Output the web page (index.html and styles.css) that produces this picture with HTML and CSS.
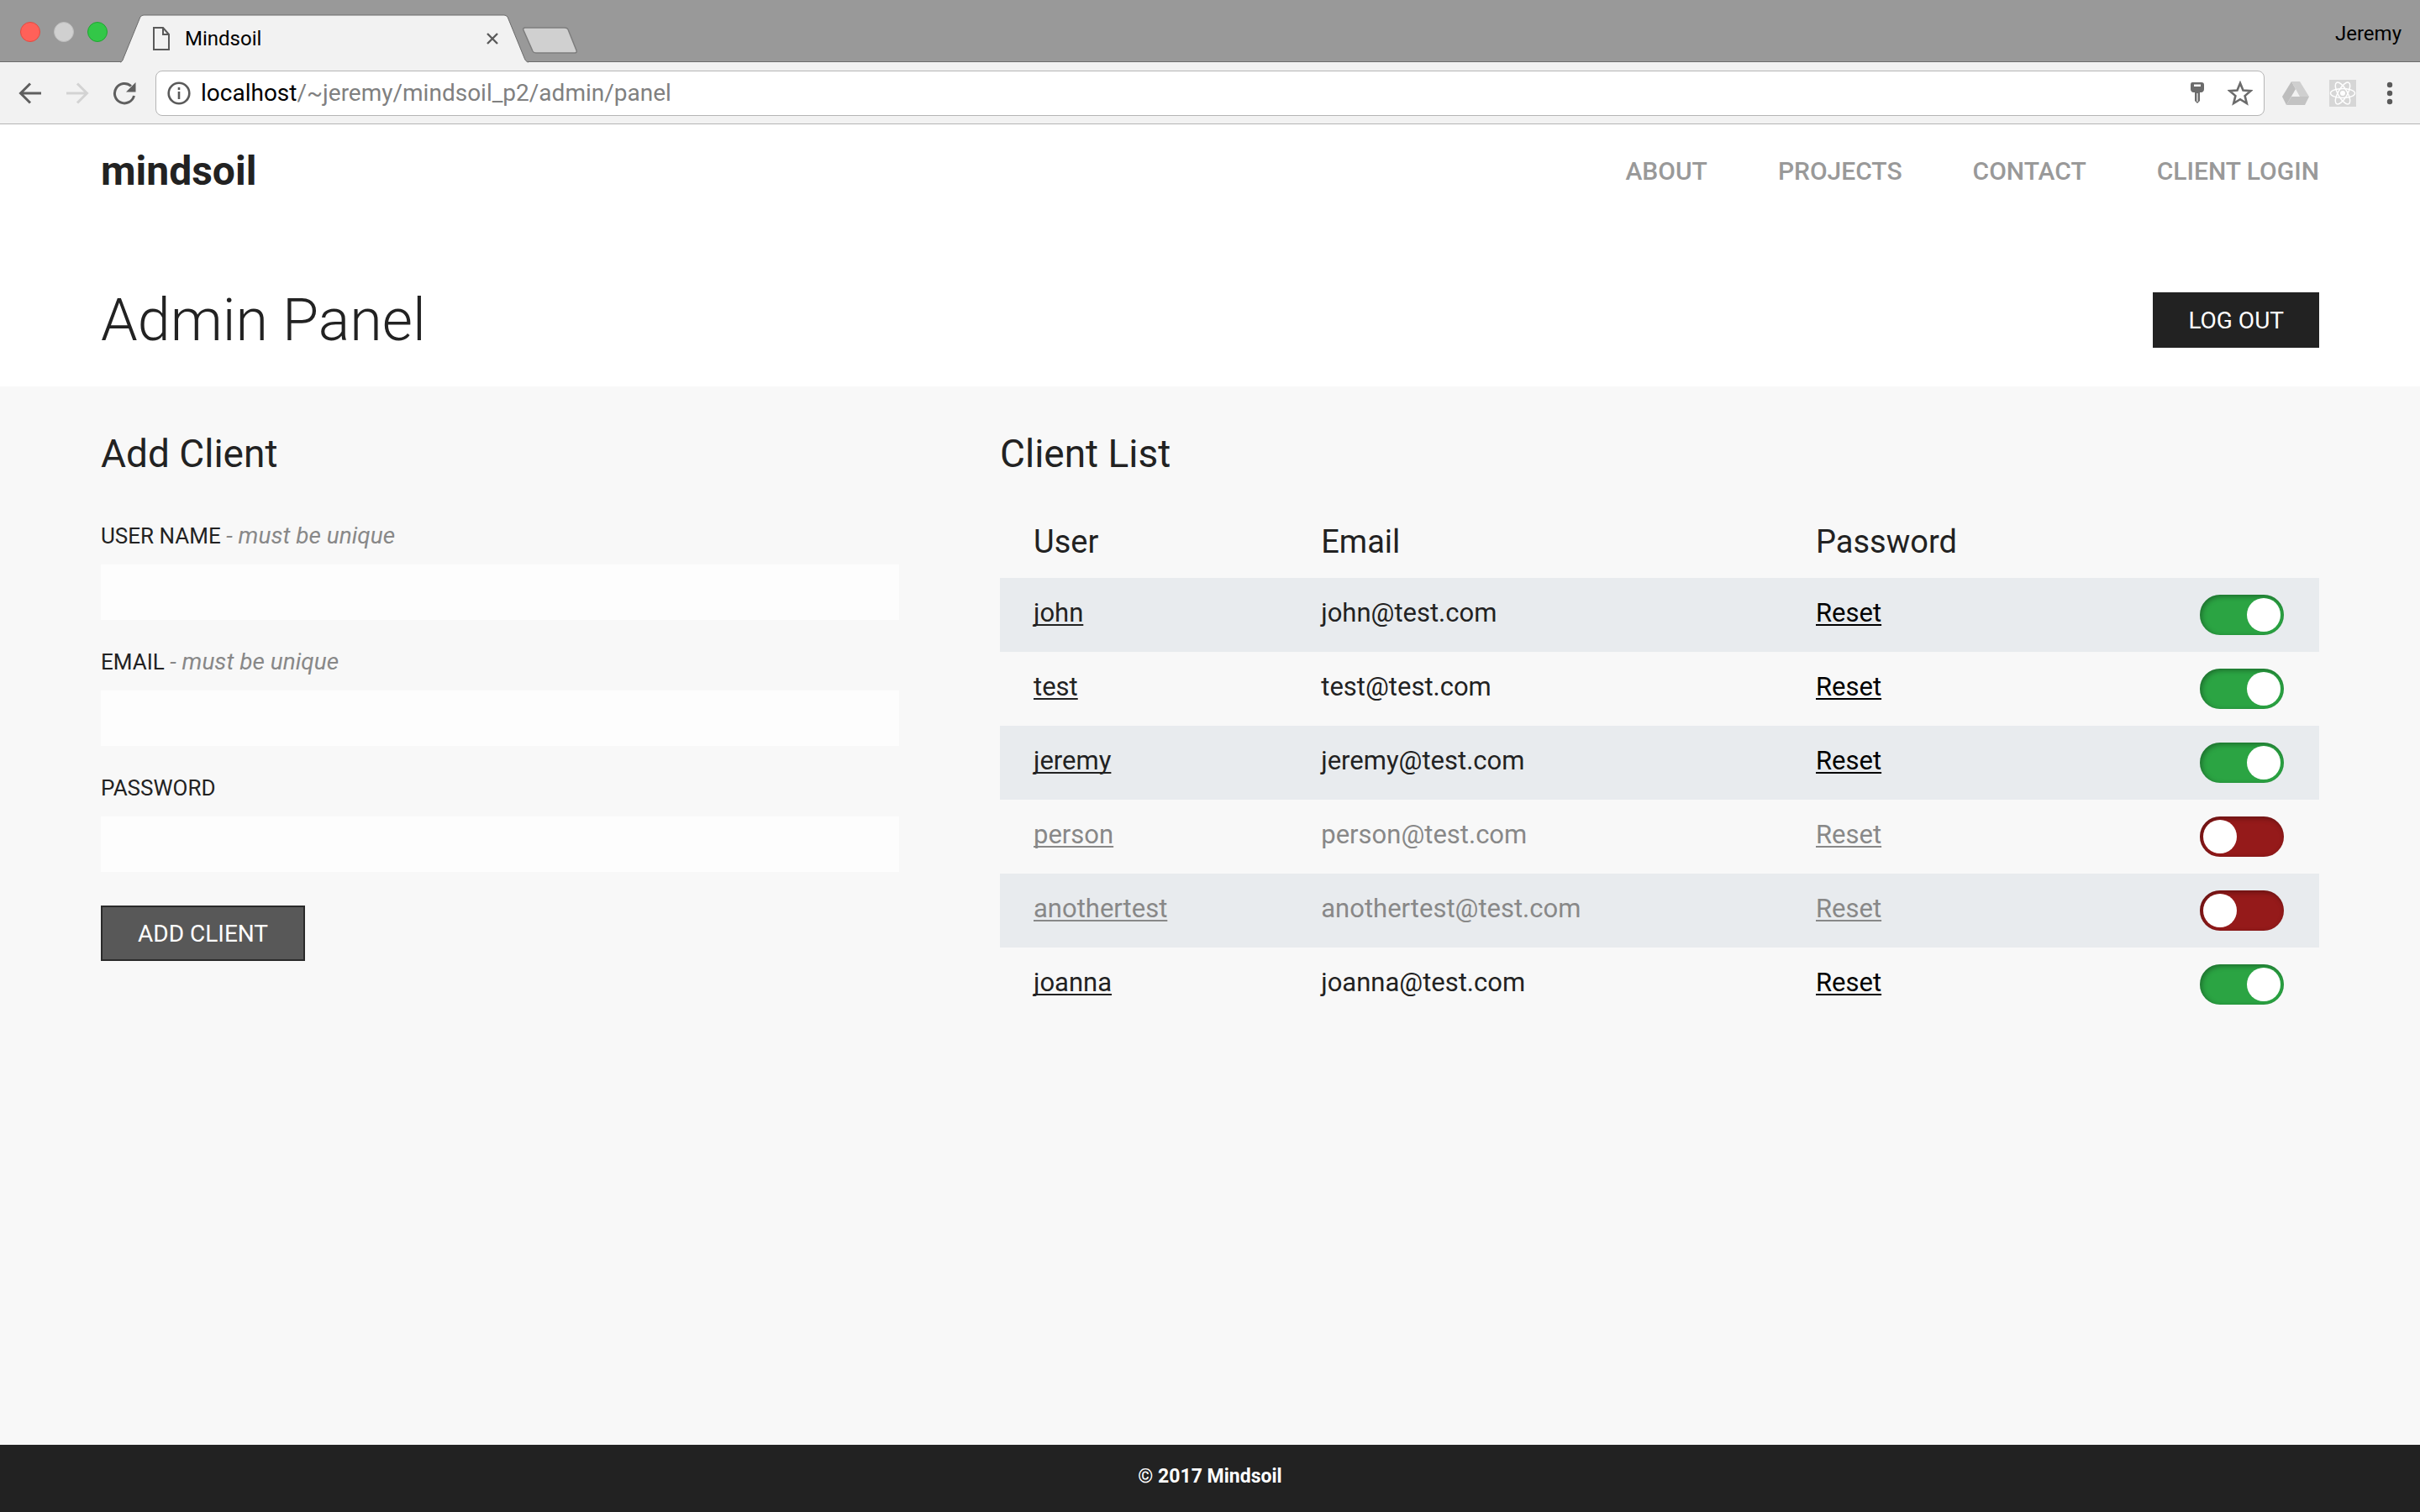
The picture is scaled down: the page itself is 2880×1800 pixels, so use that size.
FILE: index.html
```html
<!DOCTYPE html>
<html lang="en">
<head>
<meta charset="utf-8">
<meta name="viewport" content="width=device-width, initial-scale=1">
<title>Mindsoil</title>
<link rel="stylesheet" href="styles.css">
</head>
<body>
<div class="browser">
  <div class="tabstrip">
    <div class="lights">
      <button class="light light-close" type="button" aria-label="Close window"></button>
      <button class="light light-min" type="button" aria-label="Minimize window"></button>
      <button class="light light-zoom" type="button" aria-label="Zoom window"></button>
    </div>
    <div class="tab">
      <svg class="tab-shape" width="486" height="58" viewBox="0 0 486 58" aria-hidden="true">
        <path d="M0 58 L0 57 C2 57 3 55 4 52 L24 3 Q26 1 28 1 L457 1 Q459 1 461 3 L481 52 C482 55 484 57 486 57 L486 58 Z" fill="#f2f2f2"/>
        <path d="M0 57 C2 57 3 55 4 52 L24 3 Q26 1 28 1 L457 1 Q459 1 461 3 L481 52 C482 55 484 57 486 57" fill="none" stroke="#6b6b6b" stroke-width="1"/>
      </svg>
      <svg class="tab-icon" width="20" height="28" viewBox="0 0 20 28" aria-hidden="true">
        <path d="M1 1 H12 L19 9 V27 H1 Z M12 1 V9 H19" fill="none" stroke="#5a5a5a" stroke-width="2"/>
      </svg>
      <span class="tab-title">Mindsoil</span>
      <button class="tab-close" type="button" aria-label="Close tab">
        <svg width="14" height="14" viewBox="0 0 14 14"><path d="M1 1 L13 13 M13 1 L1 13" stroke="#5a5a5a" stroke-width="2.4" fill="none"/></svg>
      </button>
    </div>
    <button class="newtab" type="button" aria-label="New tab">
      <svg width="66" height="33" viewBox="0 0 66 33"><path d="M3 1 H50 Q53 1 54 3 L64 28 Q65 31 62 31 H16 Q13 31 12 29 L1 4 Q0 1 3 1 Z" fill="#d0d0d0" stroke="#7d7d7d" stroke-width="1.5"/></svg>
    </button>
    <span class="profile">Jeremy</span>
  </div>
  <div class="toolbar">
    <div class="history">
      <button class="tool" type="button" aria-label="Back">
        <svg width="28" height="28" viewBox="0 0 28 28"><path d="M27 14 H3 M14 2.500 L2.500 14 L14 25.500" fill="none" stroke="#5f5f5f" stroke-width="3"/></svg>
      </button>
      <button class="tool" type="button" aria-label="Forward">
        <svg width="28" height="28" viewBox="0 0 28 28"><path d="M1 14 H25 M14 2.500 L25.500 14 L14 25.500" fill="none" stroke="#d3d3d3" stroke-width="3"/></svg>
      </button>
      <button class="tool" type="button" aria-label="Reload">
        <svg width="28" height="28" viewBox="0 0 28 28"><path d="M25.500 17 A11.700 11.700 0 1 1 22 5.500" fill="none" stroke="#5f5f5f" stroke-width="3"/><path d="M27.500 1 V12.500 H16 Z" fill="#5f5f5f"/></svg>
      </button>
    </div>
    <div class="omnibox">
      <svg width="28" height="28" viewBox="0 0 28 28" aria-hidden="true"><circle cx="14" cy="14" r="12.300" fill="none" stroke="#5a5a5a" stroke-width="2.600"/><path d="M14 12 V21 M14 7 V10" stroke="#5a5a5a" stroke-width="2.600"/></svg>
      <div class="url" role="textbox" contenteditable="true" spellcheck="false" aria-label="Address"><span class="url-host">localhost</span>/~jeremy/mindsoil_p2/admin/panel</div>
      <svg width="18" height="26" viewBox="0 0 18 26" aria-hidden="true"><path d="M3 0 H14 Q17 0 17 3 V8 Q17 11 14 12 H12 V22 L9 25 L6 22 V12 H4 Q1 11 1 8 V3 Q1 0 3 0 Z" fill="#6b6b6b"/><path d="M5 2.500 H13 V5 H5 Z" fill="#fff"/><path d="M9 13 V23" stroke="#ddd" stroke-width="1.500"/></svg>
      <svg width="30" height="30" viewBox="0 0 30 30" aria-hidden="true"><path d="M15 3 L18.500 11.500 L27.500 12.200 L20.600 18.100 L22.800 27 L15 22.200 L7.200 27 L9.400 18.100 L2.500 12.200 L11.500 11.500 Z" fill="none" stroke="#6b6b6b" stroke-width="2.600"/></svg>
    </div>
    <div class="extensions">
      <svg width="32" height="28" viewBox="0 0 32 28" aria-hidden="true"><path d="M11 0 L0 18 L5 28 L16 9 Z" fill="#bdbdbd"/><path d="M11 0 H21 L32 18 H21 Z" fill="#cfcfcf"/><path d="M11 18 H32 L27 28 H5 Z" fill="#c3c3c3"/></svg>
      <svg width="32" height="32" viewBox="0 0 32 32" aria-hidden="true"><rect width="32" height="32" fill="#d6d6d6"/><g fill="none" stroke="#fff" stroke-width="1.500"><ellipse cx="16" cy="16" rx="14.500" ry="5.500"/><ellipse cx="16" cy="16" rx="14.500" ry="5.500" transform="rotate(60 16 16)"/><ellipse cx="16" cy="16" rx="14.500" ry="5.500" transform="rotate(120 16 16)"/></g><circle cx="16" cy="16" r="3" fill="#fff"/></svg>
      <svg width="8" height="28" viewBox="0 0 8 28" aria-hidden="true"><g fill="#5a5a5a"><circle cx="4" cy="4" r="3.200"/><circle cx="4" cy="14" r="3.200"/><circle cx="4" cy="24" r="3.200"/></g></svg>
    </div>
  </div>
</div>

<header class="site-header">
  <div class="site-bar">
    <a class="logo" href="#">mindsoil</a>
    <nav class="nav">
      <a href="#about">ABOUT</a>
      <a href="#projects">PROJECTS</a>
      <a href="#contact">CONTACT</a>
      <a href="#login">CLIENT LOGIN</a>
    </nav>
  </div>
  <div class="title-bar">
    <h1>Admin Panel</h1>
    <button class="btn btn-dark" type="button">LOG OUT</button>
  </div>
</header>

<main class="content">
  <section>
    <h2>Add Client</h2>
    <form class="form">
      <div class="field">
        <label for="username">USER NAME <em>- must be unique</em></label>
        <input id="username" type="text">
      </div>
      <div class="field">
        <label for="email">EMAIL <em>- must be unique</em></label>
        <input id="email" type="email">
      </div>
      <div class="field">
        <label for="password">PASSWORD</label>
        <input id="password" type="password">
      </div>
      <button class="btn btn-grey" type="submit">ADD CLIENT</button>
    </form>
  </section>
  <section>
    <h2>Client List</h2>
    <table class="clients">
      <colgroup><col class="col-user"><col class="col-email"><col><col class="col-toggle"></colgroup>
      <thead>
        <tr><th scope="col">User</th><th scope="col">Email</th><th scope="col">Password</th><th></th></tr>
      </thead>
      <tbody>
        <tr><td><a href="#john">john</a></td><td>john@test.com</td><td><a class="reset" href="#reset">Reset</a></td><td class="status"><input class="toggle" type="checkbox" aria-label="john active" checked></td></tr>
        <tr><td><a href="#test">test</a></td><td>test@test.com</td><td><a class="reset" href="#reset">Reset</a></td><td class="status"><input class="toggle" type="checkbox" aria-label="test active" checked></td></tr>
        <tr><td><a href="#jeremy">jeremy</a></td><td>jeremy@test.com</td><td><a class="reset" href="#reset">Reset</a></td><td class="status"><input class="toggle" type="checkbox" aria-label="jeremy active" checked></td></tr>
        <tr class="inactive"><td><a href="#person">person</a></td><td>person@test.com</td><td><a class="reset" href="#reset">Reset</a></td><td class="status"><input class="toggle" type="checkbox" aria-label="person active"></td></tr>
        <tr class="inactive"><td><a href="#anothertest">anothertest</a></td><td>anothertest@test.com</td><td><a class="reset" href="#reset">Reset</a></td><td class="status"><input class="toggle" type="checkbox" aria-label="anothertest active"></td></tr>
        <tr><td><a href="#joanna">joanna</a></td><td>joanna@test.com</td><td><a class="reset" href="#reset">Reset</a></td><td class="status"><input class="toggle" type="checkbox" aria-label="joanna active" checked></td></tr>
      </tbody>
    </table>
  </section>
</main>

<footer class="site-footer">© 2017 Mindsoil</footer>
</body>
</html>
```
FILE: styles.css
```css
* { box-sizing: border-box; }

body {
  margin: 0;
  min-height: 100vh;
  display: flex;
  flex-direction: column;
  background: #f8f8f8;
  color: #222;
  font-family: Roboto, "Liberation Sans", sans-serif;
}

button, input { font: inherit; }
button { margin: 0; padding: 0; border: 0; background: none; }
svg { display: block; flex: none; }
a { color: inherit; }

/* Browser window chrome */
.tabstrip {
  display: flex;
  align-items: flex-end;
  height: 74px;
  padding: 0 22px 0 24px;
  background: #999;
  border-bottom: 1px solid #6b6b6b;
}
.lights { display: flex; gap: 16px; padding-bottom: 23px; }
.light { width: 24px; height: 24px; border-radius: 50%; border: 1px solid; }
.light-close { background: #ff6159; border-color: #e24b41; }
.light-min { background: #d0d0d0; border-color: #bcbcbc; }
.light-zoom { background: #33c748; border-color: #1fa731; }
.tab {
  position: relative;
  display: flex;
  align-items: center;
  width: 486px;
  height: 57px;
  margin-left: 15px;
  margin-bottom: -1px;
  padding: 0 36px 0 39px;
}
.tab-shape { position: absolute; left: 0; top: 0; }
.tab-icon, .tab-title, .tab-close { position: relative; }
.tab-title { flex: 1; margin-left: 18px; font-size: 24px; color: #000; }
.newtab { margin: 0 0 8px -7px; }
.profile { margin-left: auto; padding-bottom: 19px; font-size: 24px; line-height: 28px; color: #000; }

.toolbar {
  display: flex;
  align-items: center;
  height: 74px;
  padding: 0 32px 0 22px;
  background: #f2f2f2;
  border-bottom: 1px solid #b5b5b5;
}
.history { display: flex; gap: 28px; margin-right: 23px; }
.omnibox {
  flex: 1;
  display: flex;
  align-items: center;
  height: 54px;
  padding: 0 13px;
  background: #fff;
  border: 1px solid #b5b5b5;
  border-radius: 8px;
}
.url { flex: 1; margin-left: 12px; font-size: 28px; line-height: 36px; color: #808080; outline: 0; }
.url-host { color: #000; }
.omnibox .url + svg { margin-right: 27px; }
.extensions { display: flex; align-items: center; gap: 24px; margin-left: 21px; }
.extensions svg:last-child { margin-left: 12px; }

/* Site header */
.site-header { padding: 0 120px; background: #fff; }
.site-bar { display: flex; align-items: center; justify-content: space-between; height: 112px; }
.logo { font-size: 48px; line-height: 56px; font-weight: 700; text-decoration: none; }
.nav { display: flex; gap: 84px; }
.nav a { font-size: 30px; line-height: 36px; font-weight: 500; color: #999; text-decoration: none; }
.title-bar { display: flex; align-items: center; justify-content: space-between; height: 200px; padding-bottom: 42px; padding-top: 84px; }
h1 { margin: 0; font-size: 70px; line-height: 80px; font-weight: 300; }

.btn { height: 66px; padding: 0 42px; font-size: 28px; color: #fff; }
.btn-dark { background: #222; }
.btn-grey { background: #585858; border: 2px solid #2a2a2a; }

/* Main content */
.content {
  flex: 1;
  display: grid;
  grid-template-columns: 95fr 157fr;
  gap: 120px;
  padding: 50px 120px;
}
h2 { margin: 0; font-size: 46px; line-height: 60px; font-weight: 400; }
.form { padding-top: 40px; }
.field { margin-bottom: 22px; }
.form .btn { margin-top: 18px; }
label { display: block; padding-top: 10px; margin-bottom: 16px; font-size: 26px; line-height: 36px; }
label em { font-size: 28px; color: #888; }
.field input {
  display: block;
  width: 100%;
  height: 66px;
  padding: 0 20px;
  border: 0;
  background: #fdfdfd;
  font-size: 26px;
}

.clients { width: 100%; margin-top: 40px; border-collapse: collapse; table-layout: fixed; }
.col-user { width: 21.8%; }
.col-email { width: 37.5%; }
.col-toggle { width: 182px; }
.clients th { height: 78px; padding: 0 40px 8px; font-size: 38px; line-height: 44px; font-weight: 400; text-align: left; }
.clients td { height: 88px; padding: 0 40px 4px; font-size: 31px; line-height: 40px; white-space: nowrap; }
.clients .status { padding-bottom: 0; }
.clients tbody tr:nth-child(odd) { background: #e8ebee; }
.clients a { text-decoration-thickness: 2px; text-underline-offset: 3px; text-decoration-skip-ink: none; }
.reset { color: #000; }
.clients .inactive, .inactive .reset { color: #888; }

.toggle {
  appearance: none;
  display: block;
  width: 100px;
  height: 48px;
  margin: 0;
  padding: 4px;
  border-radius: 24px;
  background: #951a1a;
  box-shadow: inset 2px 2px 6px rgba(0, 0, 0, 0.35);
}
.toggle::before {
  content: "";
  display: block;
  width: 40px;
  height: 40px;
  border-radius: 50%;
  background: #fff;
}
.toggle:checked { background: #2ba443; }
.toggle:checked::before { margin-left: auto; }

.site-footer {
  padding: 18px 20px 22px;
  background: #222;
  color: #fff;
  font-size: 23px;
  line-height: 40px;
  font-weight: 700;
  text-align: center;
}
```
